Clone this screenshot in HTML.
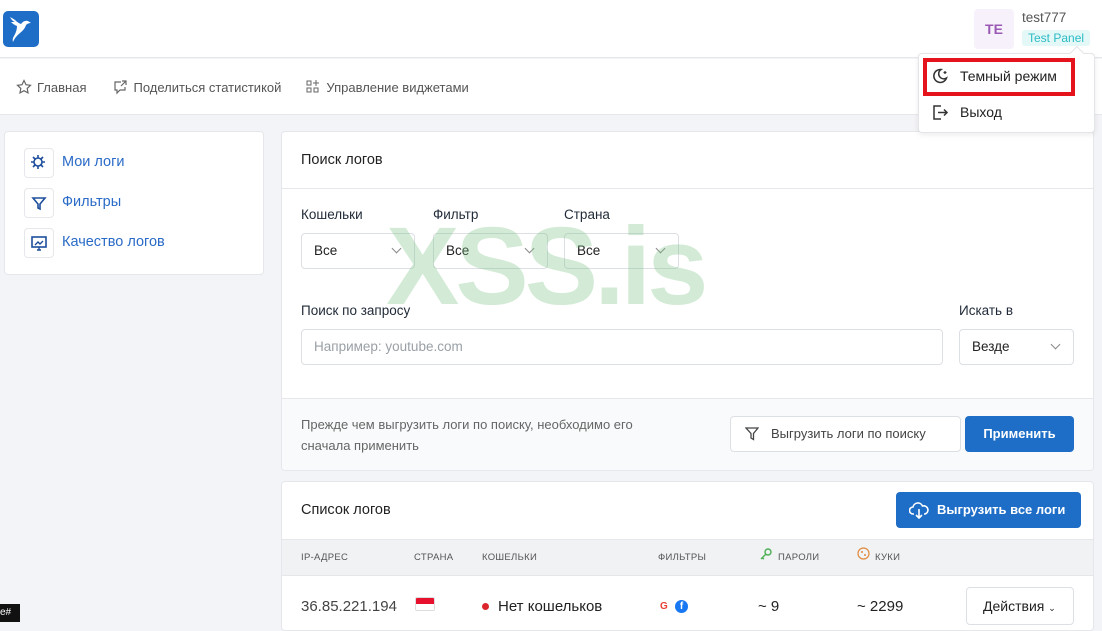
<!DOCTYPE html>
<html><head><meta charset="utf-8"><style>
*{box-sizing:border-box;margin:0;padding:0}
body{width:1102px;height:622px;overflow:hidden;background:#f3f4f7;font-family:"Liberation Sans",sans-serif;position:relative;color:#1f2937}
.a{position:absolute}
.card{position:absolute;background:#fff;border:1px solid #e5e7eb;border-radius:4px}
.lbl{font-size:13.5px;color:#1f2937}
.sel{position:absolute;border:1px solid #dcdfe4;border-radius:4px;background:#fff;font-size:13.5px;color:#222;padding-left:12px;line-height:34px}
.chev{position:absolute;right:14px;top:11px;width:7px;height:7px;border-right:1.2px solid #888;border-bottom:1.2px solid #888;transform:rotate(45deg)}
.th{font-size:9.5px;color:#555;letter-spacing:.3px;top:552px}
</style></head><body>
<!-- header -->
<div class="a" style="left:0;top:0;width:1102px;height:58px;background:#fff;border-bottom:1px solid #e6e7eb"></div>
<div class="a" style="left:3px;top:11px;width:36px;height:36px;background:#1e6dc7;border-radius:5px">
<svg width="36" height="36" viewBox="0 0 36 36"><path d="M7 6 Q9 10 12 11 L8 11 Q11 14 14 15 Q14 20 11 25 Q9 28 10 31 Q12 26 17 22 Q22 18 23 14 Q25 12 28 12 L25 10 Q21 9 18 13 Q15 12 12 9 Q9 7 7 6 Z" fill="#fff"/></svg></div>
<div class="a" style="left:974px;top:9px;width:40px;height:40px;background:#f7f1fb;border-radius:4px;color:#9b59b6;font-size:14px;font-weight:bold;text-align:center;line-height:40px">TE</div>
<div class="a" style="left:1022px;top:10px;font-size:13.5px;color:#555">test777</div>
<div class="a" style="left:1022px;top:30px;background:#e4f8f8;color:#2bbbc4;font-size:12px;padding:1px 6px;border-radius:3px">Test Panel</div>
<!-- nav -->
<div class="a" style="left:0;top:59px;width:1102px;height:56px;background:#fff;border-bottom:1px solid #e6e7eb"></div>
<div class="a" style="left:16px;top:79px;font-size:13px;color:#555;display:flex;align-items:center">
<svg width="16" height="16" viewBox="0 0 16 16"><path d="M8 1.5l2 4.2 4.5.6-3.3 3.1.8 4.5L8 11.7 4 13.9l.8-4.5L1.5 6.3 6 5.7z" fill="none" stroke="#666" stroke-width="1.2"/></svg><span style="margin-left:5px">Главная</span>
<svg style="margin-left:26px" width="16" height="16" viewBox="0 0 16 16"><path d="M9 3H3v8h2v3l3-3h5V8M10 2h4v4M14 2l-5 5" fill="none" stroke="#666" stroke-width="1.2"/></svg><span style="margin-left:5px">Поделиться статистикой</span>
<svg style="margin-left:24px" width="16" height="16" viewBox="0 0 16 16"><rect x="2" y="2" width="4" height="4" fill="none" stroke="#666"/><rect x="2" y="9" width="4" height="4" fill="none" stroke="#666"/><rect x="9" y="9" width="4" height="4" fill="none" stroke="#666"/><path d="M11 1v6M8 4h6" stroke="#666"/></svg><span style="margin-left:5px">Управление виджетами</span></div>
<!-- left card -->
<div class="card" style="left:4px;top:131px;width:260px;height:144px"></div>
<div class="a" style="left:24px;top:148px;width:30px;height:30px;border:1px solid #e5e7eb;border-radius:4px"><svg width="28" height="28" viewBox="0 0 28 28"><circle cx="13" cy="13" r="4" fill="none" stroke="#1e4f9c" stroke-width="1.6"/><path d="M13 6v3M13 17v3M6 13h3M17 13h3M8 8l2 2M16 16l2 2M18 8l-2 2M8 18l2-2" stroke="#1e4f9c" stroke-width="1.6"/></svg></div>
<div class="a" style="left:62px;top:154px;font-size:14.5px;color:#2a6bc7">Мои логи</div>
<div class="a" style="left:24px;top:188px;width:30px;height:30px;border:1px solid #e5e7eb;border-radius:4px"><svg width="28" height="28" viewBox="0 0 28 28"><path d="M8 9h12l-5 6v5l-2-1v-4z" fill="none" stroke="#1e4f9c" stroke-width="1.6"/></svg></div>
<div class="a" style="left:62px;top:194px;font-size:14.5px;color:#2a6bc7">Фильтры</div>
<div class="a" style="left:24px;top:228px;width:30px;height:30px;border:1px solid #e5e7eb;border-radius:4px"><svg width="28" height="28" viewBox="0 0 28 28"><rect x="7" y="8" width="14" height="10" fill="none" stroke="#1e4f9c" stroke-width="1.6"/><path d="M10 16l3-3 2 2 3-3M12 21h4M14 18v3" stroke="#1e4f9c" stroke-width="1.4" fill="none"/></svg></div>
<div class="a" style="left:62px;top:234px;font-size:14.5px;color:#2a6bc7">Качество логов</div>
<!-- search card -->
<div class="card" style="left:281px;top:131px;width:813px;height:340px;overflow:hidden">
<div class="a" style="left:0;top:266px;width:813px;height:74px;background:#f9fafb;border-top:1px solid #e5e7eb"></div>
<div class="a" style="left:0;top:56px;width:813px;border-top:1px solid #e5e7eb"></div>
</div>
<div class="a" style="left:301px;top:152px;font-size:14.5px;color:#222">Поиск логов</div>
<div class="a lbl" style="left:301px;top:207px">Кошельки</div>
<div class="a lbl" style="left:433px;top:207px">Фильтр</div>
<div class="a lbl" style="left:564px;top:207px">Страна</div>
<div class="sel" style="left:301px;top:233px;width:114px;height:36px">Все<span class="chev"></span></div>
<div class="sel" style="left:433px;top:233px;width:115px;height:36px">Все<span class="chev"></span></div>
<div class="sel" style="left:564px;top:233px;width:115px;height:36px">Все<span class="chev"></span></div>
<div class="a lbl" style="left:301px;top:303px">Поиск по запросу</div>
<div class="a lbl" style="left:959px;top:303px">Искать в</div>
<div class="sel" style="left:301px;top:329px;width:642px;height:36px;color:#9aa0a6">Например: youtube.com</div>
<div class="sel" style="left:959px;top:329px;width:115px;height:36px">Везде<span class="chev"></span></div>
<div class="a" style="left:301px;top:414px;font-size:13px;color:#666;line-height:21px">Прежде чем выгрузить логи по поиску, необходимо его<br>сначала применить</div>
<div class="a" style="left:730px;top:416px;width:231px;height:36px;background:#fff;border:1px solid #dcdfe4;border-radius:4px;font-size:13px;color:#444;line-height:34px;padding-left:40px">Выгрузить логи по поиску
<svg class="a" style="left:14px;top:10px" width="14" height="14" viewBox="0 0 14 14"><path d="M1 1h12L8.5 6.5v6L6 11V6.5z" fill="none" stroke="#444" stroke-width="1.3"/></svg></div>
<div class="a" style="left:965px;top:416px;width:109px;height:36px;background:#1e6dc7;border-radius:4px;font-size:13px;font-weight:bold;color:#fff;text-align:center;line-height:36px">Применить</div>
<!-- list card -->
<div class="card" style="left:281px;top:481px;width:813px;height:150px;overflow:hidden">
<div class="a" style="left:0;top:57px;width:813px;height:37px;background:#f1f2f4;border-top:1px solid #e5e7eb;border-bottom:1px solid #e5e7eb"></div></div>
<div class="a" style="left:301px;top:502px;font-size:14.5px;color:#222">Список логов</div>
<div class="a" style="left:896px;top:492px;width:185px;height:36px;background:#1e6dc7;border-radius:4px;font-size:13px;font-weight:bold;color:#fff;line-height:36px;padding-left:41px">Выгрузить все логи
<svg class="a" style="left:13px;top:9px" width="20" height="18" viewBox="0 0 20 18"><path d="M5 13H4a3.5 3.5 0 0 1 0-7 5 5 0 0 1 9.5-1A4 4 0 0 1 16 13h-1M10 8v9M7 14l3 3 3-3" fill="none" stroke="#fff" stroke-width="1.6"/></svg></div>
<div class="a th" style="left:301px">IP-АДРЕС</div>
<div class="a th" style="left:414px">СТРАНА</div>
<div class="a th" style="left:482px">КОШЕЛЬКИ</div>
<div class="a th" style="left:658px">ФИЛЬТРЫ</div>
<div class="a th" style="left:778px">ПАРОЛИ</div>
<div class="a th" style="left:875px">КУКИ</div>
<svg class="a" style="left:759px;top:547px" width="14" height="14" viewBox="0 0 14 14"><circle cx="9" cy="5" r="3" fill="none" stroke="#4caf50" stroke-width="1.4"/><path d="M7 7l-5 5M3 11l2 1" stroke="#4caf50" stroke-width="1.4"/></svg>
<svg class="a" style="left:857px;top:547px" width="13" height="13" viewBox="0 0 13 13"><circle cx="6.5" cy="6.5" r="5.5" fill="none" stroke="#e08a3c" stroke-width="1.2"/><circle cx="5" cy="5" r="1" fill="#e08a3c"/><circle cx="8" cy="8" r="1" fill="#e08a3c"/></svg>
<div class="a" style="left:301px;top:598px;font-size:15px;color:#444">36.85.221.194</div>
<div class="a" style="left:415px;top:597px;width:20px;height:14px;border:1px solid #ddd;border-radius:2px;background:linear-gradient(#e8112d 50%,#fff 50%)"></div>
<div class="a" style="left:482px;top:603px;width:7px;height:7px;border-radius:50%;background:#d9252b"></div>
<div class="a" style="left:498px;top:598px;font-size:15px;color:#222">Нет кошельков</div>
<div class="a" style="left:660px;top:601px;font-size:10px;font-weight:bold;color:#e94235">G</div>
<div class="a" style="left:675px;top:600px;width:13px;height:13px;border-radius:50%;background:#1877f2;color:#fff;font-size:10px;font-weight:bold;text-align:center;line-height:14px">f</div>
<div class="a" style="left:758px;top:598px;font-size:15px;color:#222">~ 9</div>
<div class="a" style="left:857px;top:598px;font-size:15px;color:#222">~ 2299</div>
<div class="a" style="left:966px;top:587px;width:108px;height:38px;border:1px solid #dcdfe4;border-radius:4px;background:#fff;font-size:14px;color:#222;line-height:36px;padding-left:16px">Действия <span style="font-size:9px">⌄</span></div>
<div class="a" style="left:0;top:604px;width:20px;height:18px;background:#111;color:#fff;font-size:10px;line-height:18px">e#</div>
<!-- watermark -->
<div class="a" style="left:386px;top:203px;font-size:110px;font-weight:bold;color:rgba(120,195,130,0.33);letter-spacing:-4px;pointer-events:none">XSS.is</div>
<!-- dropdown -->
<div class="a" style="left:918px;top:53px;width:177px;height:80px;background:#fff;border:1px solid #e3e5e8;border-radius:4px;box-shadow:0 2px 6px rgba(0,0,0,.08)"></div>
<div class="a" style="left:1072px;top:48px;width:10px;height:10px;background:#fff;border-left:1px solid #e3e5e8;border-top:1px solid #e3e5e8;transform:rotate(45deg)"></div>
<div class="a" style="left:923px;top:58px;width:152px;height:38px;border:4px solid #e5141c"></div>
<svg class="a" style="left:931px;top:67px" width="18" height="18" viewBox="0 0 18 18"><path d="M10 2.5a6.5 6.5 0 1 0 5.5 8.5A5 5 0 0 1 10 2.5z" fill="none" stroke="#333" stroke-width="1.5"/><path d="M14 4v3M12.5 5.5h3" stroke="#333" stroke-width="1.2"/></svg>
<div class="a" style="left:960px;top:68px;font-size:14px;color:#222">Темный режим</div>
<svg class="a" style="left:931px;top:103px" width="18" height="18" viewBox="0 0 18 18"><path d="M10 3H3v13h7M7 9.5h9M13 6.5l3 3-3 3" fill="none" stroke="#333" stroke-width="1.5"/></svg>
<div class="a" style="left:960px;top:104px;font-size:14px;color:#222">Выход</div>
</body></html>
